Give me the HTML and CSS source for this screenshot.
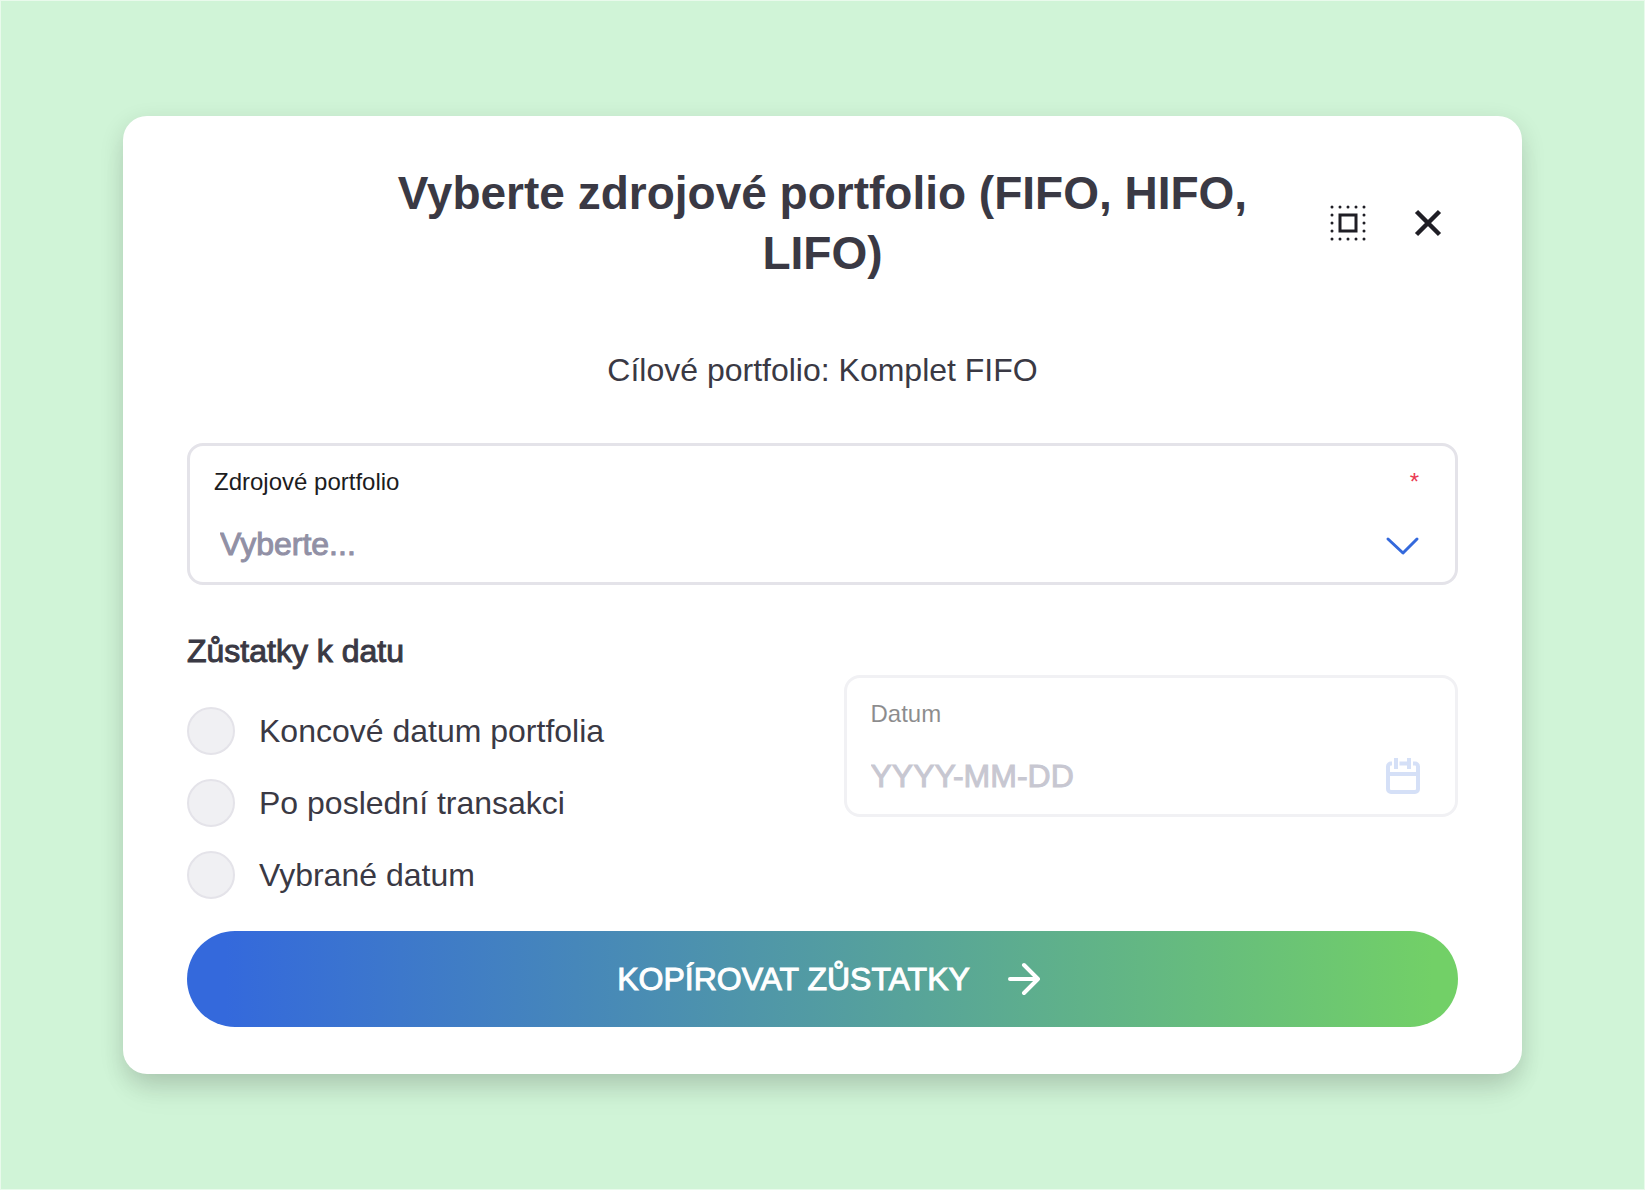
FILE: index.html
```html
<!DOCTYPE html>
<html lang="cs">
<head>
<meta charset="utf-8">
<meta name="viewport" content="width=device-width, initial-scale=1">
<title>Vyberte zdrojové portfolio</title>
<link rel="stylesheet" href="styles.css">
</head>
<body class="page">
<main class="dialog" role="dialog" aria-labelledby="dialog-title">
  <header class="dialog-header">
    <h1 class="dialog-title" id="dialog-title">Vyberte zdrojové portfolio (FIFO, HIFO, LIFO)</h1>
    <div class="dialog-actions">
      <button class="icon-button" type="button" aria-label="Celá obrazovka">
        <svg class="icon" viewBox="0 0 48 48" fill="none" stroke="currentColor">
          <rect x="16" y="16" width="16" height="16" stroke-width="3"/>
          <path d="M8 8H41M8 40H41M8 16V33M40 16V33" stroke-width="3" stroke-linecap="round" stroke-dasharray="0 8"/>
        </svg>
      </button>
      <button class="icon-button" type="button" aria-label="Zavřít">
        <svg class="icon" viewBox="0 0 48 48" fill="none" stroke="currentColor">
          <path d="M12.500 12.500 35.500 35.500M35.500 12.500 12.500 35.500" stroke-width="4.500"/>
        </svg>
      </button>
    </div>
  </header>

  <p class="target">Cílové portfolio: Komplet FIFO</p>

  <form class="form">
    <div class="field">
      <div class="field-top">
        <label class="field-label" for="source">Zdrojové portfolio</label>
        <span class="required">*</span>
      </div>
      <div class="field-row">
        <select class="control control-select" id="source" required>
          <option value="">Vyberte...</option>
        </select>
        <svg class="field-icon" viewBox="0 0 40 40" fill="none" stroke="currentColor">
          <path d="M5 15 20 29 34 15" stroke-width="3" stroke-linecap="round" stroke-linejoin="round"/>
        </svg>
      </div>
    </div>

    <div class="balance">
      <fieldset class="options">
        <legend class="options-title">Zůstatky k datu</legend>
        <label class="option"><input class="radio" type="radio" name="balance">Koncové datum portfolia</label>
        <label class="option"><input class="radio" type="radio" name="balance">Po poslední transakci</label>
        <label class="option"><input class="radio" type="radio" name="balance">Vybrané datum</label>
      </fieldset>
      <div class="field field-disabled">
        <div class="field-top">
          <label class="field-label" for="date">Datum</label>
        </div>
        <div class="field-row">
          <input class="control" id="date" type="text" placeholder="YYYY-MM-DD" disabled>
          <svg class="field-icon" viewBox="0 0 40 40" fill="none" stroke="currentColor" stroke-width="4">
            <path d="M9 7.500H8a3 3 0 0 0-3 3V33a3 3 0 0 0 3 3H32a3 3 0 0 0 3-3V10.500a3 3 0 0 0-3-3H30M16.500 7.500H26M5 18H35M13 2V13M26 2V13"/>
          </svg>
        </div>
      </div>
    </div>

    <button class="submit" type="submit">
      <span class="submit-text">KOPÍROVAT ZŮSTATKY</span>
      <svg class="submit-icon" viewBox="0 0 40 40" fill="none" stroke="currentColor">
        <path d="M6 20H34M20 6 34 20 20 34" stroke-width="4" stroke-linecap="round" stroke-linejoin="round"/>
      </svg>
    </button>
  </form>
</main>
</body>
</html>
```
FILE: styles.css
```css
* {
  box-sizing: border-box;
}

.page {
  margin: 0;
  min-height: 100vh;
  padding: 115px 122px;
  border: 1px solid #e9faec;
  background: #d0f4d7;
  color: #3a3944;
  font-family: "Liberation Sans", Arial, sans-serif;
  font-size: 32px;
  line-height: 40px;
}

.dialog {
  padding: 47px 64px;
  border-radius: 24px;
  background: #fff;
  box-shadow:
    0 8px 24px rgba(0, 0, 0, 0.14),
    0 24px 32px -8px rgba(0, 0, 0, 0.07);
}

.dialog-header {
  display: grid;
  grid-template-columns: 176px 1fr 176px;
  align-items: center;
}

.dialog-title {
  grid-column: 2;
  margin: 0;
  font-size: 46px;
  line-height: 60px;
  text-align: center;
}

.dialog-actions {
  display: flex;
  justify-content: flex-end;
  gap: 20px;
}

.icon-button {
  display: grid;
  place-items: center;
  width: 60px;
  height: 60px;
  padding: 0;
  border: 0;
  background: none;
  color: #1f1e25;
}

.icon {
  width: 48px;
  height: 48px;
}

.target {
  margin: 67px 0 53px;
  text-align: center;
}

.field {
  padding: 20px 32px 12px 24px;
  border: 3px solid #e4e3e9;
  border-radius: 16px;
}

.field-top {
  display: flex;
  justify-content: space-between;
  height: 32px;
  margin-bottom: 20px;
  font-size: 24px;
  line-height: 32px;
}

.field-label {
  color: #1c1c1e;
}

.required {
  padding-right: 4px;
  color: #ea3a53;
}

.field-row {
  display: flex;
  align-items: center;
  height: 52px;
}

/* Medium weight: the regular face thickened by a thin outline */
.control,
.options-title,
.submit-text {
  -webkit-text-stroke: 1px currentColor;
}

.control {
  flex: 1;
  min-width: 0;
  height: 52px;
  padding: 0;
  border: 0;
  background: none;
  color: #9190a5;
  font: 32px/40px "Liberation Sans", Arial, sans-serif;
  appearance: none;
}

.control::placeholder {
  color: #9190a5;
  opacity: 1;
}

.control-select {
  padding-left: 6px;
}

.field-icon {
  width: 40px;
  height: 40px;
  color: #3469dc;
}

.field-disabled {
  border-color: #f1f1f4;
}

.field-disabled .field-label,
.field-disabled .control {
  opacity: 0.5;
}

.field-disabled .control {
  -webkit-text-stroke-color: #9190a5;
}

.field-disabled .field-icon {
  opacity: 0.2;
}

.balance {
  display: grid;
  grid-template-columns: 1fr 1fr;
  gap: 42px;
  align-items: start;
  padding-top: 46px;
}

.balance .field {
  margin-top: 44px;
}

.options {
  min-width: 0;
  margin: 0;
  padding: 0;
  border: 0;
}

.options-title {
  padding: 0;
  margin-bottom: 36px;
}

.option {
  display: flex;
  align-items: center;
  gap: 24px;
  height: 48px;
  margin-bottom: 24px;
}

.radio {
  width: 48px;
  height: 48px;
  margin: 0;
  border: 2px solid #e4e3e9;
  border-radius: 50%;
  background: #f0f0f3;
  appearance: none;
}

.submit {
  display: flex;
  align-items: center;
  justify-content: center;
  gap: 34px;
  width: 100%;
  height: 96px;
  margin-top: 8px;
  padding: 0 0 0 16px;
  border: 0;
  border-radius: 48px;
  background: linear-gradient(90deg, #3469dc 3%, #72d067 98%);
  color: #fff;
  font: 32px/40px "Liberation Sans", Arial, sans-serif;
}

.submit-icon {
  width: 40px;
  height: 40px;
}
```
